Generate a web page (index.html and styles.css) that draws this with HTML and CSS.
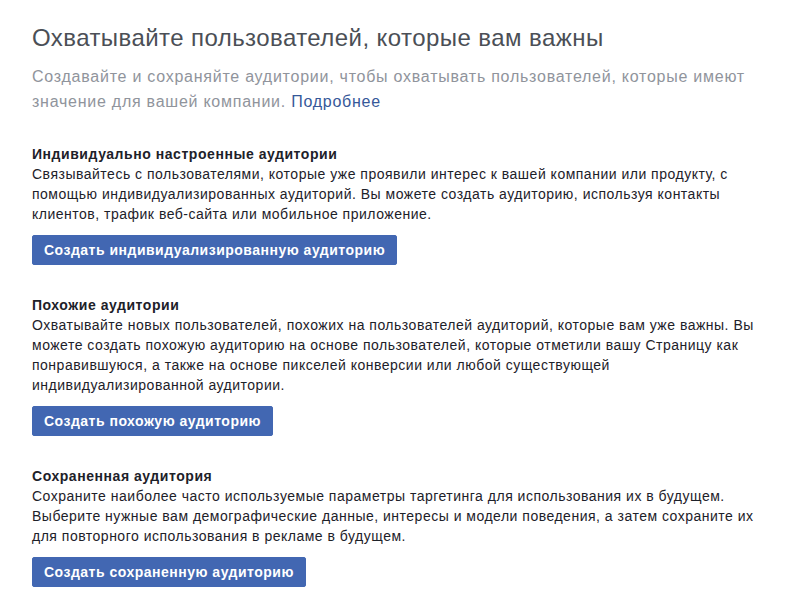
FILE: index.html
```html
<!DOCTYPE html>
<html lang="ru">
    <head>
        <meta charset="UTF-8" />
        <link rel="stylesheet" href="styles.css">
    </head>
    <body>
        <div id="wrapper">
            <h1 class="title">Охватывайте пользователей, которые вам важны</h1>
            <p class="lead">Создавайте и сохраняйте аудитории, чтобы охватывать пользователей, которые имеют значение для вашей компании. <a href="#">Подробнее</a></p>

            <div class="section">
                <h2>Индивидуально настроенные аудитории</h2>
                <p>Связывайтесь с пользователями, которые уже проявили интерес к вашей компании или продукту, с помощью индивидуализированных аудиторий. Вы можете создать аудиторию, используя контакты клиентов, трафик веб-сайта или мобильное приложение.</p>
                <button class="btn">Создать индивидуализированную аудиторию</button>
            </div>

            <div class="section">
                <h2>Похожие аудитории</h2>
                <p>Охватывайте новых пользователей, похожих на пользователей аудиторий, которые вам уже важны. Вы можете создать похожую аудиторию на основе пользователей, которые отметили вашу Страницу как понравившуюся, а также на основе пикселей конверсии или любой существующей индивидуализированной аудитории.</p>
                <button class="btn">Создать похожую аудиторию</button>
            </div>

            <div class="section">
                <h2>Сохраненная аудитория</h2>
                <p>Сохраните наиболее часто используемые параметры таргетинга для использования их в будущем. Выберите нужные вам демографические данные, интересы и модели поведения, а затем сохраните их для повторного использования в рекламе в будущем.</p>
                <button class="btn">Создать сохраненную аудиторию</button>
            </div>
        </div>
    </body>
</html>
```

FILE: styles.css
```css
body {
    margin: 0;
    background-color: #fff;
    color: #1d2129;
    font-family: "Liberation Sans", Arial, sans-serif;
}
#wrapper {
    width: 740px;
    padding: 22px 0 0 32px;
}
.title {
    margin: 0;
    font-size: 24px;
    font-weight: normal;
    line-height: 32px;
    letter-spacing: 0.43px;
    color: #4b4f56;
}
.lead {
    margin: 10px 0 0 0;
    font-size: 16px;
    line-height: 25px;
    letter-spacing: 0.75px;
    color: #90949c;
}
.lead a {
    color: #365899;
    text-decoration: none;
}
.section {
    margin-top: 30px;
}
.section h2 {
    margin: 0;
    font-size: 14px;
    font-weight: bold;
    line-height: 20px;
    letter-spacing: 0.55px;
}
.section p {
    margin: 0;
    font-size: 14px;
    line-height: 20px;
    letter-spacing: 0.5px;
}
.btn {
    margin-top: 11px;
    height: 30px;
    padding: 0 11px;
    border: 1px solid #4267b2;
    border-radius: 2px;
    background-color: #4267b2;
    color: #fff;
    font-family: "Liberation Sans", Arial, sans-serif;
    font-size: 14px;
    font-weight: bold;
    letter-spacing: 0.5px;
}
```
